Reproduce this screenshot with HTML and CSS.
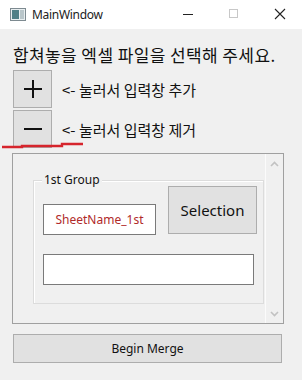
FILE: index.html
```html
<!DOCTYPE html>
<html>
<head>
<meta charset="utf-8">
<link rel="stylesheet" href="styles.css">
</head>
<body>

<div class="window">
  <div class="titlebar">
    <svg class="appicon" width="16" height="13" viewBox="0 0 16 13">
      <rect x="0.5" y="0.5" width="15" height="12" fill="#e8eef0" stroke="#7d8a90"/>
      <rect x="2" y="2" width="7" height="9" fill="#4f7f86"/>
      <rect x="10" y="2" width="4" height="9" fill="#b9c6ca"/>
    </svg>
    <span class="title">MainWindow</span>
    <div class="controls">
      <svg class="ctl" width="46" height="29" viewBox="0 0 46 29"><line x1="18" y1="14.5" x2="28" y2="14.5" stroke="#222" stroke-width="1"/></svg>
      <svg class="ctl" width="46" height="29" viewBox="0 0 46 29"><rect x="18.5" y="9.5" width="8" height="8" fill="none" stroke="#c8c8c8"/></svg>
      <svg class="ctl" width="46" height="29" viewBox="0 0 46 29"><path d="M18 9 L28 19 M28 9 L18 19" stroke="#222" stroke-width="1.1"/></svg>
    </div>
  </div>

  <div class="content">
    <div class="intro">합쳐놓을 엑셀 파일을 선택해 주세요.</div>

    <div class="toolrow">
      <button class="toolbtn">
        <svg width="20" height="20" viewBox="0 0 20 20"><path d="M10 1 V19 M1 10 H19" stroke="#111" stroke-width="2"/></svg>
      </button>
      <span class="hint">&lt;- 눌러서 입력창 추가</span>
    </div>
    <div class="toolrow">
      <button class="toolbtn">
        <svg width="20" height="20" viewBox="0 0 20 20"><path d="M1 10 H19" stroke="#111" stroke-width="2"/></svg>
      </button>
      <span class="hint">&lt;- 눌러서 입력창 제거</span>
    </div>

    <div class="scrollframe">
      <div class="scrollbody">
        <div class="groupbox">
          <span class="grouptitle">1st Group</span>
          <div class="grouprow">
            <div class="field sheetname">SheetName_1st</div>
            <button class="selbtn">Selection</button>
          </div>
          <div class="field wide"></div>
        </div>
      </div>
      <div class="scrollbar">
        <svg width="17" height="12" viewBox="0 0 17 12"><path d="M5 8 L8.5 4.5 L12 8" fill="none" stroke="#c2c2c2" stroke-width="1.6"/></svg>
        <svg width="17" height="12" viewBox="0 0 17 12"><path d="M5 4 L8.5 7.5 L12 4" fill="none" stroke="#c2c2c2" stroke-width="1.6"/></svg>
      </div>
    </div>

    <button class="mergebtn">Begin Merge</button>
  </div>

  <svg class="redline" width="88" height="10" viewBox="0 0 88 10">
    <polyline points="2,7 22,7 22,6 62,6 62,4 83,4" fill="none" stroke="#d6252d" stroke-width="2.4"/>
  </svg>
</div>

</body>
</html>
```

FILE: styles.css
```css
body {
    margin: 0;
    font-family: "Noto Sans", "Noto Sans CJK KR", sans-serif;
    background-color: #f0f0f0;
}

.window {
    position: relative;
    width: 302px;
    height: 380px;
    background-color: #f0f0f0;
    overflow: hidden;
}

/* Title bar */
.titlebar {
    height: 29px;
    background-color: #ffffff;
    display: flex;
    align-items: center;
}

.appicon {
    margin-left: 10px;
    margin-right: 6px;
}

.title {
    font-size: 12px;
    letter-spacing: -0.3px;
    color: #222;
}

.controls {
    margin-left: auto;
    display: flex;
    margin-right: -1px;
}

.ctl {
    display: block;
}

/* Main area */
.content {
    padding: 0 0 0 13px;
    display: flex;
    flex-direction: column;
}

.intro {
    margin-top: 16px;
    height: 20px;
    line-height: 20px;
    font-family: "Noto Sans CJK KR", sans-serif;
    font-size: 17px;
    letter-spacing: 0.4px;
    color: #111;
}

.toolrow {
    display: flex;
    align-items: center;
    margin-top: 5px;
}

.toolrow + .toolrow {
    margin-top: 2px;
}

.toolbtn {
    width: 39px;
    height: 38px;
    padding: 0;
    border: 1px solid #adadad;
    background-color: #e1e1e1;
    display: flex;
    align-items: center;
    justify-content: center;
}

.hint {
    margin-left: 10px;
    font-family: "Noto Sans CJK KR", sans-serif;
    font-size: 15px;
    color: #111;
}

/* Scroll area */
.scrollframe {
    margin-top: 5px;
    margin-left: -1px;
    width: 272px;
    height: 171px;
    box-sizing: border-box;
    border: 1px solid #a0a0a0;
    display: flex;
}

.scrollbody {
    flex: 1;
    padding: 26px 0 0 20px;
}

.scrollbar {
    width: 17px;
    border-left: 1px solid #fbfbfb;
    display: flex;
    flex-direction: column;
    justify-content: space-between;
    padding: 4px 0 3px;
}

.groupbox {
    position: relative;
    width: 231px;
    height: 124px;
    box-sizing: border-box;
    border: 1px solid #dcdcdc;
    box-shadow: inset 1px 1px 0 #ffffff;
    padding: 5px 0 0 9px;
}

.grouptitle {
    position: absolute;
    top: -9px;
    left: 8px;
    padding: 0 2px;
    background-color: #f0f0f0;
    font-size: 12px;
    line-height: 16px;
    color: #111;
}

.grouprow {
    display: flex;
    align-items: flex-end;
}

.field {
    box-sizing: border-box;
    height: 31px;
    background-color: #ffffff;
    border: 1px solid #7a7a7a;
}

.sheetname {
    width: 113px;
    margin-bottom: -1px;
    display: flex;
    align-items: center;
    justify-content: center;
    font-size: 12px;
    color: #b02a2a;
}

.selbtn {
    margin-left: 12px;
    width: 89px;
    height: 48px;
    padding: 0;
    border: 1px solid #adadad;
    background-color: #e1e1e1;
    font-family: "Noto Sans", sans-serif;
    font-size: 15px;
    color: #111;
}

.wide {
    width: 211px;
    margin-top: 20px;
}

.mergebtn {
    margin-top: 10px;
    width: 269px;
    height: 29px;
    padding: 0;
    border: 1px solid #adadad;
    background-color: #e1e1e1;
    font-family: "Noto Sans", sans-serif;
    font-size: 12px;
    color: #111;
}

/* Hand drawn red mark over the controls */
.redline {
    position: absolute;
    left: 0;
    top: 140px;
}
```
